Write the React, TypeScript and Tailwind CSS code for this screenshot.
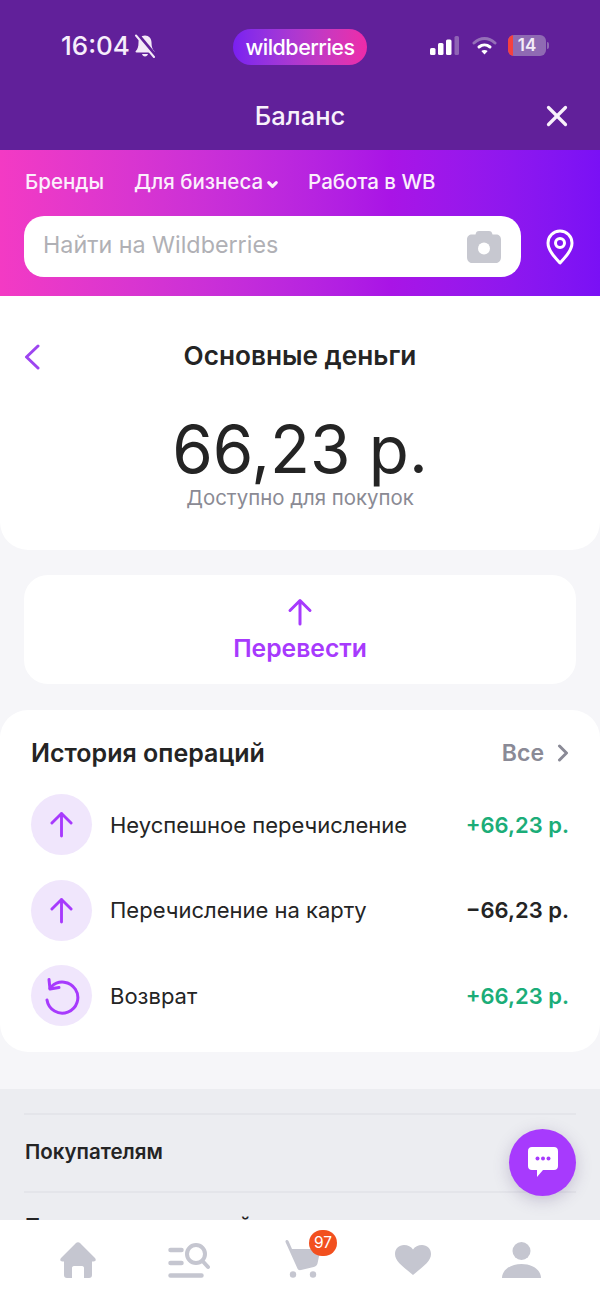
import { X, ChevronDown } from 'lucide-react'

const operations = [
  { id: 1, title: 'Неуспешное перечисление', amount: '+66,23 р.', income: true, back: false },
  { id: 2, title: 'Перечисление на карту', amount: '−66,23 р.', income: false, back: false },
  { id: 3, title: 'Возврат', amount: '+66,23 р.', income: true, back: true },
]

function UpArrow({ className }: { className: string }) {
  return (
    <svg viewBox="0 0 24 28" className={className} fill="none" stroke="#a73afd" strokeWidth="3" strokeLinecap="round" strokeLinejoin="round">
      <path d="M12 26V2.500M2 12.500l10-10 10 10" />
    </svg>
  )
}

function StatusBar() {
  return (
    <div className="flex h-[94px] items-start pt-[29px]">
      <div className="flex w-[233px] items-center pl-[61px] pt-[1px]">
        <span className="text-[26px] leading-[32px] font-medium text-[#f6eefb]">16:04</span>
        <svg viewBox="0 0 22 24" className="ml-[4px] h-[24px] w-[22px]">
          <path d="M11 1.500c-4 0-6.500 3-6.500 6.800 0 4.500-.8 6.700-2.700 8.700-.6.700-.2 1.500.7 1.500h17c.9 0 1.300-.8.7-1.500-1.900-2-2.700-4.200-2.700-8.700 0-3.800-2.500-6.800-6.500-6.800z" fill="#f3e9f8" />
          <path d="M8 20h6c-.4 1.600-1.500 2.500-3 2.500S8.400 21.600 8 20z" fill="#f3e9f8" />
          <path d="M3.500 .5 21 21.500" stroke="#61209a" strokeWidth="4" />
          <path d="M2 1.500 20 23" stroke="#f3e9f8" strokeWidth="2" strokeLinecap="round" />
        </svg>
      </div>
      <div className="flex h-[36px] w-[134px] items-center justify-center rounded-full bg-gradient-to-r from-[#7a1ff0] to-[#ee2aa8]">
        <span className="text-[21.500px] leading-[26px] font-medium tracking-[-0.5px] text-white">wildberries</span>
      </div>
      <div className="ml-[63px] flex items-center pt-[6px]">
        <svg viewBox="0 0 29 19" className="h-[19px] w-[29px]">
          <rect x="0" y="12" width="5.500" height="7" rx="1.500" fill="#fff" />
          <rect x="8" y="7" width="5.500" height="12" rx="1.500" fill="#fff" />
          <rect x="16" y="3.500" width="5.500" height="15.500" rx="1.500" fill="#fff" />
          <rect x="24.500" y="0" width="4.500" height="19" rx="1.500" fill="#8f63b5" />
        </svg>
        <svg viewBox="0 0 25 19" className="ml-[13px] h-[19px] w-[25px]" fill="none" strokeLinecap="round">
          <path d="M2 7C8.500 1 16.500 1 23 7" stroke="#9570b8" strokeWidth="3" />
          <path d="M7 11c3.300-2.800 7.700-2.800 11 0" stroke="#fff" strokeWidth="3" />
          <path d="M12.500 18.500l-3.200-3.600c1.900-1.300 4.500-1.300 6.400 0z" fill="#fff" />
        </svg>
        <div className="relative ml-[11px] flex h-[21px] w-[38px] items-center justify-center overflow-hidden rounded-[6px] bg-[#8f6ab3]">
          <div className="absolute inset-y-0 left-0 w-[5px] bg-[#f5403f]" />
          <span className="relative text-[17px] leading-[21px] font-semibold text-[#f3ecf8]">14</span>
        </div>
        <div className="ml-[1px] h-[7px] w-[2px] rounded-r bg-[#8f6ab3]" />
      </div>
    </div>
  )
}

function TopBar() {
  return (
    <div className="bg-[#61209a]">
      <StatusBar />
      <div className="relative flex h-[56px] items-start justify-center pt-[6px]">
        <span className="text-[25.500px] leading-[32px] font-medium text-[#f8f1fb]">Баланс</span>
        <X className="absolute top-[5px] right-[26px] h-[34px] w-[34px] text-[#f8f1fb]" strokeWidth={2.3} absoluteStrokeWidth />
      </div>
    </div>
  )
}

function SearchHeader() {
  return (
    <div className="h-[146px] bg-gradient-to-r from-[#f33ac4] via-[#a914e6] via-65% to-[#7a10f5] px-[24px] pt-[19px]">
      <div className="flex h-[26px] items-center pl-[1px] text-[20.500px] leading-[26px] font-medium text-[#fbeffc]">
        <span>Бренды</span>
        <span className="ml-[30px]">Для бизнеса</span>
        <ChevronDown className="ml-[2px] mt-[4px] h-[15px] w-[15px]" strokeWidth={5} />
        <span className="ml-[28px]">Работа в WB</span>
      </div>
      <div className="mt-[21px] flex items-center">
        <div className="flex h-[61px] w-[497px] items-center justify-between rounded-[20px] bg-white pr-[20px] pl-[19px]">
          <span className="mt-[-2px] text-[23.300px] text-[#b0b0b5]">Найти на Wildberries</span>
          <svg viewBox="0 0 34 32" className="h-[32px] w-[34px]">
            <path d="M12 0h10c2 0 3 1 3.500 3.500H29c3 0 5 2 5 5V26c0 3.500-2 6-5 6H5c-3 0-5-2.500-5-6V8.500c0-3 2-5 5-5h3.500C9 1 10 0 12 0z" fill="#c7c8d0" />
            <circle cx="17" cy="17.500" r="6" fill="#fff" />
          </svg>
        </div>
        <svg viewBox="0 0 28 36" className="ml-[25px] h-[36px] w-[28px]" fill="none" stroke="#fff" strokeWidth="3">
          <path d="M14 34C8 27.500 2 21 2 14a12 12 0 0 1 24 0c0 7-6 13.500-12 20z" strokeLinejoin="round" />
          <circle cx="14" cy="14" r="4.500" />
        </svg>
      </div>
    </div>
  )
}

function BalanceCard() {
  return (
    <div className="relative h-[254px] rounded-b-[28px] bg-white pt-[43px] text-center">
      <svg viewBox="0 0 16 26" className="absolute top-[48px] left-[24px] h-[26px] w-[16px]" fill="none" stroke="#9d45f0" strokeWidth="3" strokeLinecap="round" strokeLinejoin="round">
        <path d="M14 2 2.500 13 14 24" />
      </svg>
      <h1 className="text-[26.200px] leading-[34px] font-semibold text-[#242424]">Основные деньги</h1>
      <div className="mt-[42px] text-[65.500px] leading-[70px] font-normal text-[#242424]">66,23 р.</div>
      <div className="text-[20.400px] leading-[26px] text-[#8a8a94]">Доступно для покупок</div>
    </div>
  )
}

function TransferCard() {
  return (
    <div className="mx-[24px] mt-[25px] flex h-[109px] flex-col items-center rounded-[24px] bg-white pt-[23px]">
      <UpArrow className="h-[28px] w-[26px]" />
      <span className="mt-[6px] text-[24.700px] leading-[32px] font-semibold text-[#a73afd]">Перевести</span>
    </div>
  )
}

function History() {
  return (
    <div className="mt-[26px] h-[342px] rounded-[28px] bg-white px-[31px] pt-[26px]">
      <div className="flex h-[34px] items-center justify-between">
        <h2 className="text-[25px] leading-[32px] font-semibold text-[#242424]">История операций</h2>
        <div className="flex items-center">
          <span className="text-[23px] leading-[32px] font-semibold text-[#8a8a96]">Все</span>
          <svg viewBox="0 0 12 18" className="ml-[13px] h-[18px] w-[12px]" fill="none" stroke="#8a8a96" strokeWidth="3" strokeLinecap="round" strokeLinejoin="round">
            <path d="M2.500 2l7 7-7 7" />
          </svg>
        </div>
      </div>
      <div className="mt-[24px] flex flex-col gap-[24.500px]">
        {operations.map((op) => (
          <div key={op.id} className="flex items-center">
            <div className="flex h-[61px] w-[61px] items-center justify-center rounded-full bg-[#f0e6fc]">
              {op.back ? (
                <svg viewBox="0 0 36 40" className="h-[40px] w-[36px]" fill="none" stroke="#a73afd" strokeWidth="3" strokeLinecap="round" strokeLinejoin="round">
                  <path d="M3 24A15.500 15.500 0 1 0 7.500 10.500L6 12.500" />
                  <path d="M5 3.500 6 13l9-1.500" />
                </svg>
              ) : (
                <UpArrow className="h-[27px] w-[23px]" />
              )}
            </div>
            <span className="ml-[18px] text-[22px] leading-[28px] text-[#242424]">{op.title}</span>
            <span className={`ml-auto text-[22px] leading-[28px] font-semibold ${op.income ? 'text-[#1bad78]' : 'text-[#242424]'}`}>
              {op.amount}
            </span>
          </div>
        ))}
      </div>
    </div>
  )
}

function Footer() {
  return (
    <div className="mt-[37px] h-[400px] bg-[#ecedf1] px-[24px] pt-[24px]">
      <div className="border-t-2 border-[#e4e5ea]">
        <div className="flex h-[74px] items-center pl-[1px] text-[20.500px] font-semibold text-[#242424]">Покупателям</div>
      </div>
      <div className="mt-[2px] border-t-2 border-[#e4e5ea] pt-[20px] pl-[1px] text-[20.500px] leading-[26px] font-semibold text-[#242424]">Правила пользований</div>
    </div>
  )
}

function BottomNav() {
  return (
    <div className="absolute inset-x-0 bottom-0 flex h-[80px] items-start bg-white pl-[60px] pt-[22px]">
      <svg viewBox="0 0 36 36" className="h-[36px] w-[36px]" fill="#c5c6d0">
        <path d="M16 1c1-1 3-1 4 0l15 15c1.500 1.800.6 3.500-1.500 3.500H32V33c0 2-1 3-3 3h-5V26c0-1-.5-2-2-2h-8c-1.500 0-2 1-2 2v10H7c-2 0-3-1-3-3V19.500H2.500C.4 19.500-.5 17.800 1 16z" />
      </svg>
      <svg viewBox="0 0 42 36" className="ml-[72px] h-[36px] w-[42px]" fill="none" stroke="#c5c6d0" strokeLinecap="round">
        <path d="M2.500 8h11M2.500 21h11M2.500 33.500h31" strokeWidth="4.500" />
        <circle cx="28" cy="12" r="9" strokeWidth="4" />
        <path d="M34.500 19l5.500 6" strokeWidth="4" />
      </svg>
      <div className="relative ml-[75px] mt-[-2px] h-[38px] w-[35px]">
        <svg viewBox="0 0 35 38" className="h-[38px] w-[35px]" fill="#c5c6d0">
          <path d="M.5 2C0 .2 2.500-.7 3.500 1L7 9h26c1.500 0 2.300 1 2 2.500l-2.500 12c-.5 2-1.800 3-3.800 3.500L16 30c-2 .5-3.500-.5-4-2.500z" />
          <circle cx="8" cy="34.500" r="3.200" />
          <circle cx="28" cy="34.500" r="3.200" />
        </svg>
        <div className="absolute top-[-10px] left-[24px] flex h-[26px] w-[28px] items-center justify-center rounded-full bg-[#f2501f] text-[15.500px] leading-none text-white">
          97
        </div>
      </div>
      <svg viewBox="0 0 36 30" className="ml-[75px] mt-[3px] h-[30px] w-[36px]" fill="#c5c6d0">
        <path d="M18 30C9 22 0 17 0 9 0 3.500 4 0 9 0c4 0 7 1.500 9 4.500C20 1.500 23 0 27 0c5 0 9 3.500 9 9 0 8-9 13-18 21z" />
      </svg>
      <svg viewBox="0 0 39 36" className="ml-[71px] h-[36px] w-[39px]" fill="#c5c6d0">
        <circle cx="19.500" cy="9" r="9" />
        <path d="M0 36c0-8 8.500-14 19.500-14S39 28 39 36z" />
      </svg>
    </div>
  )
}

export default function App() {
  return (
    <div className="relative h-[1300px] w-[600px] overflow-hidden bg-[#f6f6f9] font-['Inter',sans-serif]">
      <TopBar />
      <SearchHeader />
      <BalanceCard />
      <TransferCard />
      <History />
      <Footer />
      <button className="absolute top-[1129px] right-[24px] flex h-[67px] w-[67px] items-center justify-center rounded-full bg-[#a73afd] shadow-[0_4px_16px_rgba(80,60,120,0.25)]">
        <svg viewBox="0 0 30 32" className="h-[32px] w-[30px]">
          <path d="M4 0h22c2.500 0 4 1.500 4 4v15c0 2.500-1.500 4-4 4H15l-6 7v-7H4c-2.500 0-4-1.500-4-4V4c0-2.500 1.500-4 4-4z" fill="#fff" />
          <circle cx="9.500" cy="11.500" r="2" fill="#a73afd" />
          <circle cx="15" cy="11.500" r="2" fill="#a73afd" />
          <circle cx="20.500" cy="11.500" r="2" fill="#a73afd" />
        </svg>
      </button>
      <BottomNav />
    </div>
  )
}
